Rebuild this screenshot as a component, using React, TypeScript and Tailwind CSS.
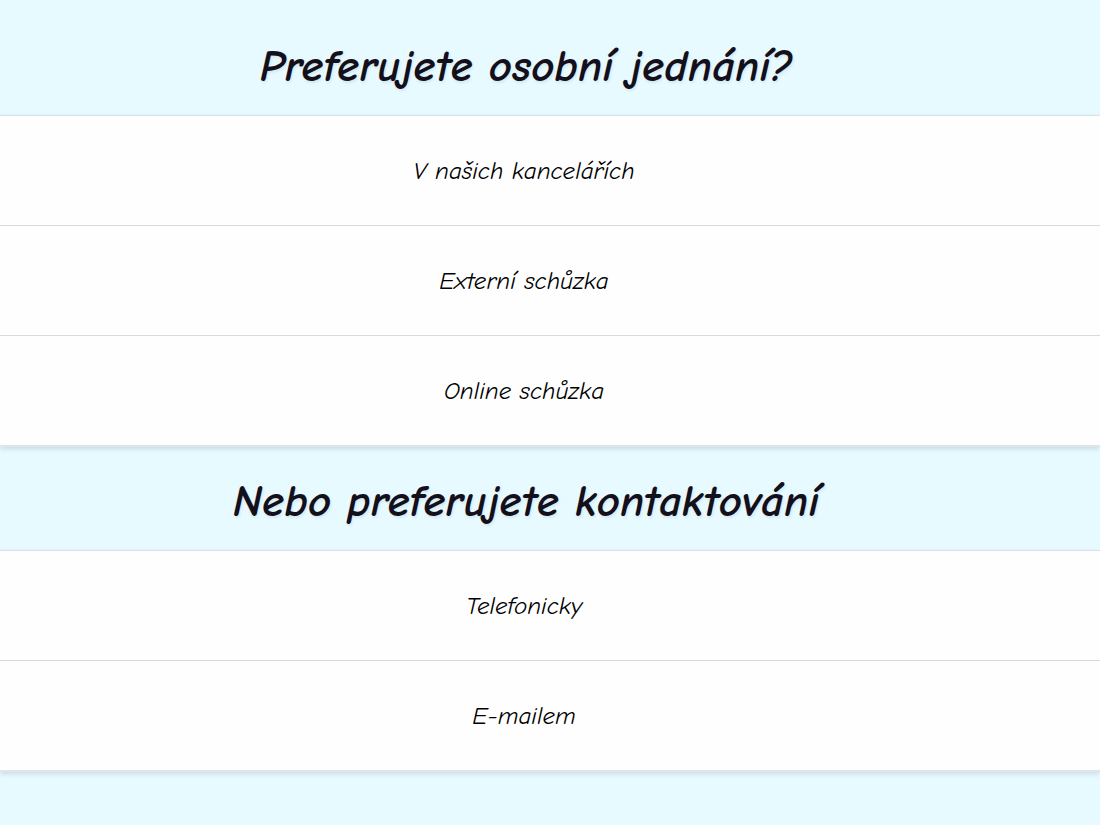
const meetingOptions = ['V našich kancelářích', 'Externí schůzka', 'Online schůzka'];
const contactOptions = ['Telefonicky', 'E-mailem'];

type ChoiceGroupProps = {
  title: string;
  options: string[];
};

function ChoiceGroup({ title, options }: ChoiceGroupProps) {
  return (
    <section>
      <h2 className="flex min-h-[103px] items-center justify-center pt-1 pr-12 text-[45px] leading-[56px] font-bold italic text-[#13101c] [text-shadow:1px_2px_3px_rgba(0,0,0,0.08)]">
        {title}
      </h2>
      <ul className="divide-y divide-[#d9dadb] border-t border-b-2 border-t-[#d9e2e6] border-b-[#dde6e8] bg-[#fefefe] shadow-[0_2px_5px_rgba(0,0,0,0.12)]">
        {options.map((option) => (
          <li key={option}>
            <button
              type="button"
              className="flex min-h-[109px] w-full cursor-pointer items-center justify-center pr-[52px] text-[25px] leading-8 italic text-black"
            >
              {option}
            </button>
          </li>
        ))}
      </ul>
    </section>
  );
}

export default function App() {
  return (
    <main className="min-h-screen bg-[#e6faff] pt-3 font-['Comic_Neue','Ink_Free','Segoe_Print','Lato',cursive]">
      <ChoiceGroup title="Preferujete osobní jednání?" options={meetingOptions} />
      <ChoiceGroup title="Nebo preferujete kontaktování" options={contactOptions} />
    </main>
  );
}
